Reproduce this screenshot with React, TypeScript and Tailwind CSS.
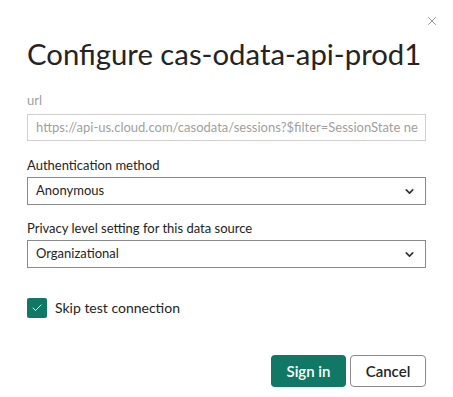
import { ChevronDown, Check, X } from "lucide-react";

const font = { fontFamily: 'Lato, "Noto Sans", sans-serif' };

function Select({ value }: { value: string }) {
	return (
		<div className="flex items-center justify-between h-[28px] border border-[#8a8a8a] pl-[8px] pr-[9px] text-[13px] text-[#252423]">
			<span>{value}</span>
			<ChevronDown className="w-[13px] h-[13px] text-[#333]" strokeWidth={3} />
		</div>
	);
}

export default function App() {
	return (
		<div className="w-[453px] h-[397px] bg-white" style={font}>
			<div className="flex justify-end pt-[14px] pr-[14px] h-[34px]">
				<X className="w-[14px] h-[14px] text-[#8a8a8a]" strokeWidth={1.5} />
			</div>
			<div className="px-[27px]">
				<h1 className="text-[29.3px] leading-[40px] text-[#252423] whitespace-nowrap">
					Configure cas-odata-api-prod1
				</h1>

				<p className="mt-[17px] text-[13px] leading-[18px] text-[#a19f9d]">url</p>
				<div className="mt-[5px] h-[27px] border border-[#d2d0ce] px-[8px] flex items-center text-[13px] text-[#a19f9d] overflow-hidden whitespace-nowrap">
					https://api-us.cloud.com/casodata/sessions?$filter=SessionState ne
				</div>

				<p className="mt-[15px] text-[13px] leading-[18px] text-[#252423]">Authentication method</p>
				<div className="mt-[3px]">
					<Select value="Anonymous" />
				</div>

				<p className="mt-[14px] text-[13px] leading-[18px] text-[#252423]">
					Privacy level setting for this data source
				</p>
				<div className="mt-[3px]">
					<Select value="Organizational" />
				</div>

				<div className="mt-[29px] flex items-center gap-[8px]">
					<div className="w-[20px] h-[20px] rounded-[2px] bg-[#117865] flex items-center justify-center">
						<Check className="w-[12px] h-[12px] text-white" strokeWidth={2} />
					</div>
					<span className="text-[14px] text-[#252423]">Skip test connection</span>
				</div>

				<div className="mt-[37px] flex justify-end gap-[4px]">
					<button className="w-[75px] h-[32px] rounded-[4px] bg-[#117865] text-white text-[15px] font-semibold">
						Sign in
					</button>
					<button className="w-[76px] h-[32px] rounded-[4px] border border-[#8a8a8a] bg-white text-[#252423] text-[15px] font-semibold">
						Cancel
					</button>
				</div>
			</div>
		</div>
	);
}
